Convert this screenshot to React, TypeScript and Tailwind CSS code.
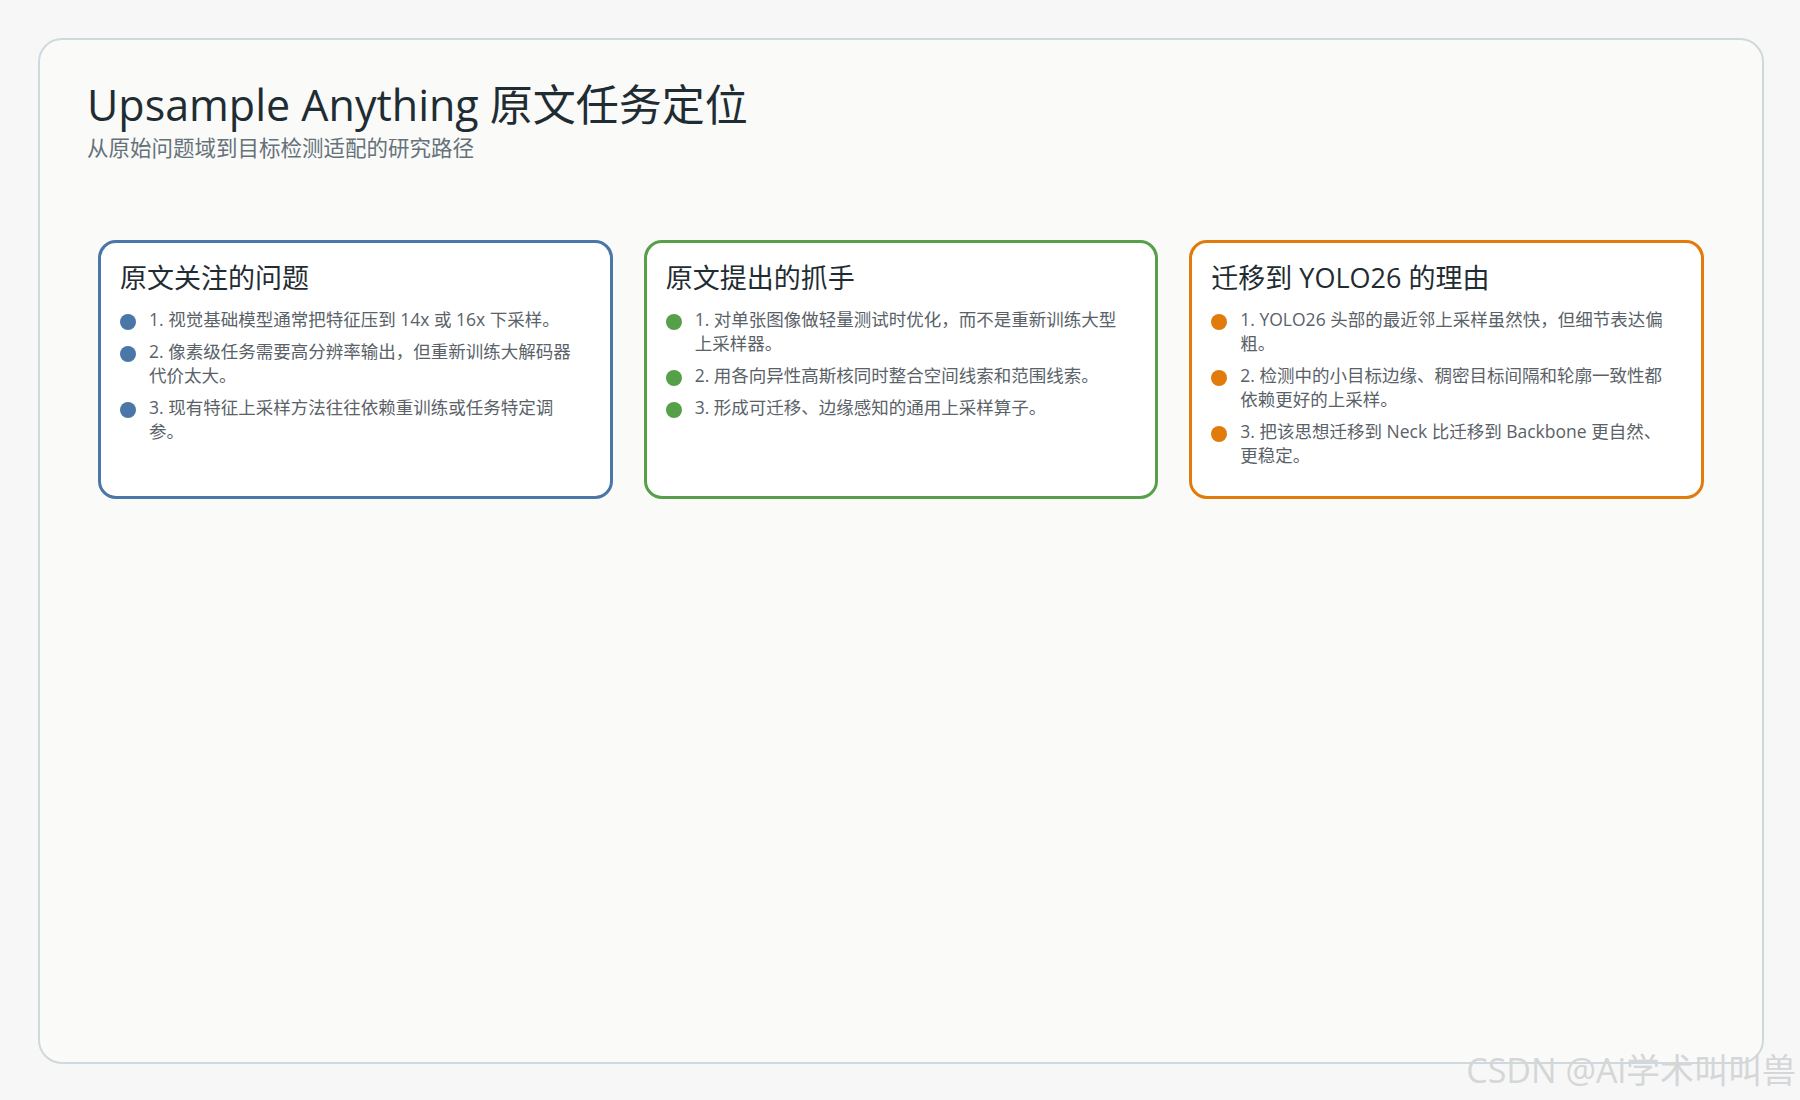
const cards = [
  {
    title: '原文关注的问题',
    border: 'border-[#4a76a8]',
    dot: 'bg-[#4a76a8]',
    items: [
      '1. 视觉基础模型通常把特征压到 14x 或 16x 下采样。',
      '2. 像素级任务需要高分辨率输出，但重新训练大解码器代价太大。',
      '3. 现有特征上采样方法往往依赖重训练或任务特定调参。',
    ],
  },
  {
    title: '原文提出的抓手',
    border: 'border-[#56a04a]',
    dot: 'bg-[#56a04a]',
    items: [
      '1. 对单张图像做轻量测试时优化，而不是重新训练大型上采样器。',
      '2. 用各向异性高斯核同时整合空间线索和范围线索。',
      '3. 形成可迁移、边缘感知的通用上采样算子。',
    ],
  },
  {
    title: '迁移到 YOLO26 的理由',
    border: 'border-[#e07b0c]',
    dot: 'bg-[#e07b0c]',
    items: [
      '1. YOLO26 头部的最近邻上采样虽然快，但细节表达偏粗。',
      '2. 检测中的小目标边缘、稠密目标间隔和轮廓一致性都依赖更好的上采样。',
      '3. 把该思想迁移到 Neck 比迁移到 Backbone 更自然、更稳定。',
    ],
  },
]

export default function App() {
  return (
    <div
      className="relative h-[1100px] w-[1800px] bg-[#f7f7f7] pt-[38px] pl-[38px]"
      style={{ fontFamily: '"Open Sans", "Noto Sans CJK SC", sans-serif' }}
    >
      <div className="h-[1026px] w-[1726px] rounded-[24px] border-2 border-[#cfd8dc] bg-[#fafaf9] px-[47px] pt-[36px]">
        <h1 className="text-[43px] leading-[58px] text-[#1f2d33]">Upsample Anything 原文任务定位</h1>
        <p className="text-[21.5px] leading-[28px] text-[#66727a]">从原始问题域到目标检测适配的研究路径</p>
        <div className="mt-[78px] grid grid-cols-3 gap-[31px] px-[11px]">
          {cards.map((c) => (
            <div key={c.title} className={`h-[259px] rounded-[18px] border-[3px] ${c.border} bg-white pl-[19px] pr-[24px] pt-[18px]`}>
              <h2 className="text-[27px] leading-[34px] text-[#1f2d33]">{c.title}</h2>
              <ul className="mt-[12px] flex flex-col gap-[8px]">
                {c.items.map((t) => (
                  <li key={t} className="flex gap-[13px] text-[17.5px] leading-[24px] text-[#5a6268]">
                    <span className={`mt-[7px] h-[16px] w-[16px] shrink-0 rounded-full ${c.dot}`} />
                    <span>{t}</span>
                  </li>
                ))}
              </ul>
            </div>
          ))}
        </div>
      </div>
      <div className="absolute bottom-[4px] right-[4px] text-[34px] text-[#d4d6d8]">CSDN @Ai学术叫叫兽</div>
    </div>
  )
}
